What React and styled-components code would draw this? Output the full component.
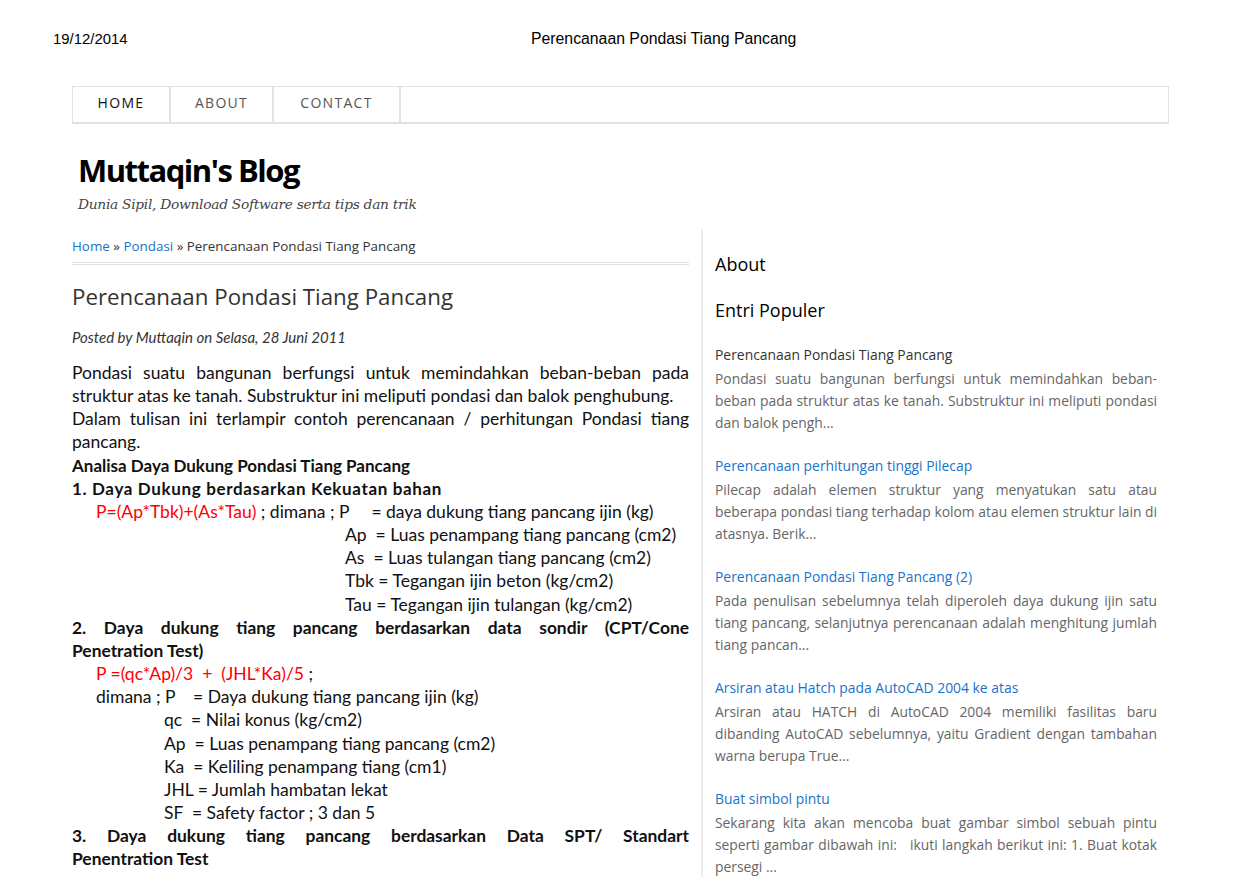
import React from 'react';
import styled, { createGlobalStyle } from 'styled-components';

const color = {
  text: '#333',
  muted: '#666',
  link: '#1a73c9',
  line: '#e2e2e2',
  red: '#f00',
};

const GlobalStyle = createGlobalStyle`
  html, body {
    margin: 0;
    padding: 0;
    background: #fff;
  }
  body {
    font-family: 'Open Sans', 'Noto Sans', sans-serif;
    color: ${color.text};
  }
`;

const PrintHeader = styled.div`
  display: grid;
  grid-template-columns: 478px 1fr;
  align-items: center;
  padding: 29px 0 0 53px;
  height: 19px;
  font-family: 'Liberation Sans', Arial, sans-serif;
  color: #000;
`;

const PrintDate = styled.div`
  font-size: 14.9px;
`;

const PrintTitle = styled.div`
  font-size: 15.8px;
`;

const Page = styled.div`
  width: 1097px;
  margin: 38px 0 0 72px;
`;

const Nav = styled.nav`
  display: flex;
  height: 35px;
  border: 1px solid ${color.line};
  border-bottom-width: 2px;
`;

const NavItem = styled.a`
  display: flex;
  align-items: center;
  justify-content: center;
  box-sizing: border-box;
  width: ${(p) => p.w}px;
  padding-bottom: 4px;
  border-right: 2px solid ${color.line};
  font-size: 14px;
  letter-spacing: 1.3px;
  color: ${(p) => (p.active ? '#111' : '#555')};
  text-decoration: none;
`;

const Brand = styled.header`
  padding: 27px 0 0 6px;
  height: 105px;
  box-sizing: border-box;
`;

const BlogTitle = styled.h1`
  margin: 0;
  font-family: 'Open Sans', sans-serif;
  font-weight: 700;
  font-size: 31px;
  letter-spacing: -1.5px;
  line-height: 38px;
  color: #000;
`;

const Tagline = styled.div`
  margin-top: 7px;
  font-family: 'DejaVu Serif', 'Liberation Serif', serif;
  font-style: italic;
  font-size: 13.8px;
  letter-spacing: -0.3px;
  color: #444;
`;

const Columns = styled.div`
  display: grid;
  grid-template-columns: 617px 1fr;
  column-gap: 12px;
`;

const Main = styled.main`
  padding-top: 8px;
`;

const Breadcrumb = styled.div`
  font-size: 13.4px;
  line-height: 18px;
  padding-bottom: 7px;
  border-bottom: 3px double ${color.line};
  color: #333;
  a {
    color: ${color.link};
    text-decoration: none;
  }
`;

const PostTitle = styled.h2`
  margin: 17px 0 0;
  font-weight: 400;
  font-size: 22.3px;
  line-height: 30px;
  color: #333;
`;

const Meta = styled.div`
  margin-top: 16px;
  font-family: Lato, sans-serif;
  font-style: italic;
  font-size: 15px;
  line-height: 18px;
  color: #333;
`;

const Body = styled.div`
  margin-top: 15px;
  font-family: Lato, 'Liberation Sans', sans-serif;
  font-size: 17.5px;
  line-height: 23.15px;
  color: #111;
`;

const Line = styled.div`
  padding-left: ${(p) => p.indent || 0}px;
  font-weight: ${(p) => (p.bold ? 700 : 400)};
  font-size: ${(p) => p.size || 17.5}px;
  letter-spacing: ${(p) => p.spacing || 0}px;
  white-space: ${(p) => (p.justify ? 'normal' : 'pre')};
  text-align: ${(p) => (p.justify ? 'justify' : 'left')};
  text-align-last: ${(p) => (p.justify ? 'justify' : 'auto')};
`;

const Red = styled.span`
  color: ${color.red};
`;

const Sidebar = styled.aside`
  border-left: 2px solid #ececec;
  padding: 23px 12px 0 12px;
  min-height: 660px;
`;

const WidgetTitle = styled.h3`
  margin: 0 0 ${(p) => p.gap}px;
  font-weight: 400;
  font-size: 18px;
  line-height: 24px;
  color: #000;
`;

const PopularItem = styled.div`
  margin-bottom: 21px;
`;

const PopularTitle = styled.a`
  display: block;
  font-size: 13.9px;
  line-height: 22px;
  color: ${(p) => (p.visited ? '#333' : color.link)};
  text-decoration: none;
  margin-bottom: 2px;
`;

const Snippet = styled.p`
  margin: 0;
  font-size: 13.85px;
  line-height: 22px;
  color: ${color.muted};
  text-align: justify;
`;

const popular = [
  {
    title: 'Perencanaan Pondasi Tiang Pancang',
    visited: true,
    text: 'Pondasi suatu bangunan berfungsi untuk memindahkan beban-beban pada struktur atas ke tanah. Substruktur ini meliputi pondasi dan balok pengh...',
  },
  {
    title: 'Perencanaan perhitungan tinggi Pilecap',
    text: 'Pilecap adalah elemen struktur yang menyatukan satu atau beberapa pondasi tiang terhadap kolom atau elemen struktur lain di atasnya. Berik...',
  },
  {
    title: 'Perencanaan Pondasi Tiang Pancang (2)',
    text: 'Pada penulisan sebelumnya telah diperoleh daya dukung ijin satu tiang pancang, selanjutnya perencanaan adalah menghitung jumlah tiang pancan...',
  },
  {
    title: 'Arsiran atau Hatch pada AutoCAD 2004 ke atas',
    text: 'Arsiran atau HATCH di AutoCAD 2004 memiliki fasilitas baru dibanding AutoCAD sebelumnya, yaitu Gradient dengan tambahan warna berupa True...',
  },
  {
    title: 'Buat simbol pintu',
    text: 'Sekarang kita akan mencoba buat gambar simbol sebuah pintu seperti gambar dibawah ini:\u00a0\u00a0 ikuti langkah berikut ini: 1. Buat kotak persegi ...',
  },
];

export default function App() {
  return (
    <>
      <GlobalStyle />
      <PrintHeader>
        <PrintDate>19/12/2014</PrintDate>
        <PrintTitle>Perencanaan Pondasi Tiang Pancang</PrintTitle>
      </PrintHeader>
      <Page>
        <Nav>
          <NavItem w={98} active>HOME</NavItem>
          <NavItem w={103}>ABOUT</NavItem>
          <NavItem w={127}>CONTACT</NavItem>
        </Nav>
        <Brand>
          <BlogTitle>Muttaqin's Blog</BlogTitle>
          <Tagline>Dunia Sipil, Download Software serta tips dan trik</Tagline>
        </Brand>
        <Columns>
          <Main>
            <Breadcrumb>
              <a href="#">Home</a> » <a href="#">Pondasi</a> » Perencanaan Pondasi Tiang Pancang
            </Breadcrumb>
            <PostTitle>Perencanaan Pondasi Tiang Pancang</PostTitle>
            <Meta>Posted by Muttaqin on Selasa, 28 Juni 2011</Meta>
            <Body>
              <Line justify>Pondasi suatu bangunan berfungsi untuk memindahkan beban-beban pada</Line>
              <Line>struktur atas ke tanah. Substruktur ini meliputi pondasi dan balok penghubung.</Line>
              <Line justify>Dalam tulisan ini terlampir contoh perencanaan / perhitungan Pondasi tiang</Line>
              <Line>pancang.</Line>
              <Line bold size={17}>Analisa Daya Dukung Pondasi Tiang Pancang</Line>
              <Line bold size={17} spacing={0.65}>1. Daya Dukung berdasarkan Kekuatan bahan</Line>
              <Line indent={24}>
                <Red>P=(Ap*Tbk)+(As*Tau)</Red> ; dimana ; P     = daya dukung tiang pancang ijin (kg)
              </Line>
              <Line indent={273}>Ap  = Luas penampang tiang pancang (cm2)</Line>
              <Line indent={273}>As  = Luas tulangan tiang pancang (cm2)</Line>
              <Line indent={273}>Tbk = Tegangan ijin beton (kg/cm2)</Line>
              <Line indent={273}>Tau = Tegangan ijin tulangan (kg/cm2)</Line>
              <Line bold size={17.4} justify>
                2. Daya dukung tiang pancang berdasarkan data sondir (CPT/Cone
              </Line>
              <Line bold size={17.4}>Penetration Test)</Line>
              <Line indent={24}>
                <Red>P =(qc*Ap)/3  +  (JHL*Ka)/5</Red> ;
              </Line>
              <Line indent={24}>dimana ; P    = Daya dukung tiang pancang ijin (kg)</Line>
              <Line indent={92}>qc  = Nilai konus (kg/cm2)</Line>
              <Line indent={92}>Ap  = Luas penampang tiang pancang (cm2)</Line>
              <Line indent={92}>Ka  = Keliling penampang tiang (cm1)</Line>
              <Line indent={92}>JHL = Jumlah hambatan lekat</Line>
              <Line indent={92}>SF  = Safety factor ; 3 dan 5</Line>
              <Line bold size={17.4} justify>
                3. Daya dukung tiang pancang berdasarkan Data SPT/ Standart
              </Line>
              <Line bold size={17.4}>Penentration Test</Line>
            </Body>
          </Main>
          <Sidebar>
            <WidgetTitle gap={22}>About</WidgetTitle>
            <WidgetTitle gap={22}>Entri Populer</WidgetTitle>
            {popular.map((item) => (
              <PopularItem key={item.title}>
                <PopularTitle href="#" visited={item.visited}>{item.title}</PopularTitle>
                <Snippet>{item.text}</Snippet>
              </PopularItem>
            ))}
          </Sidebar>
        </Columns>
      </Page>
    </>
  );
}
